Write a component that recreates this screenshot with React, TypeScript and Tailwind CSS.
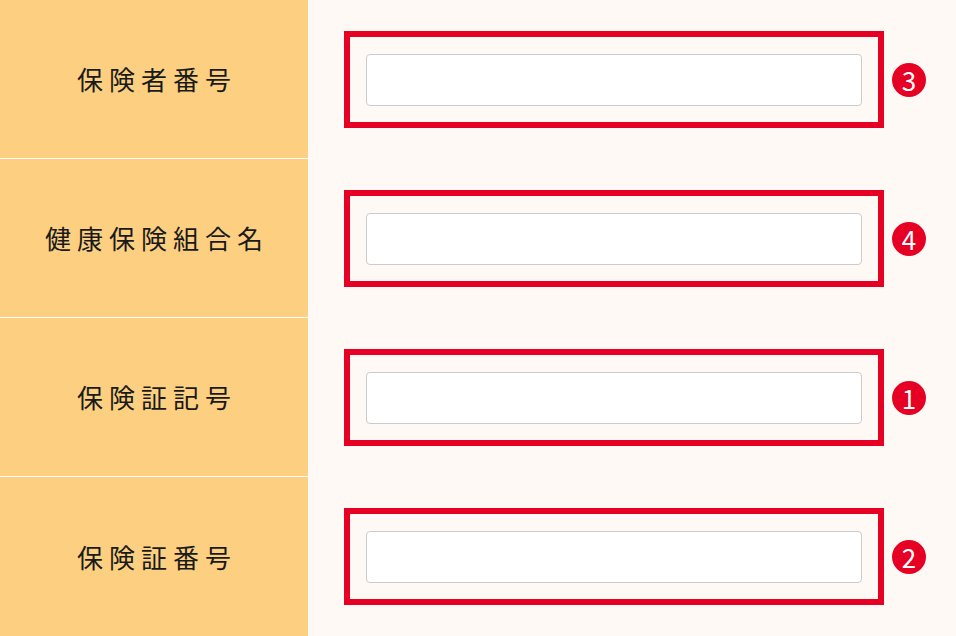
const rows = [
  { label: "保険者番号", num: "3" },
  { label: "健康保険組合名", num: "4" },
  { label: "保険証記号", num: "1" },
  { label: "保険証番号", num: "2" },
];

export default function App() {
  return (
    <div
      className="flex flex-col w-[956px] h-[636px] bg-[#fff9f5]"
      style={{ fontFamily: '"Noto Sans CJK JP", "Noto Sans", sans-serif' }}
    >
      {rows.map((row, i) => (
        <div key={row.label} className="flex h-[159px]">
          <div
            className={
              i < rows.length - 1
                ? "w-[308px] shrink-0 bg-[#fcd080] border-b border-white flex items-center justify-center"
                : "w-[308px] shrink-0 bg-[#fcd080] flex items-center justify-center"
            }
          >
            <span className="text-[26px] leading-none tracking-[6px] pl-[6px] text-[#1a1a1a]">
              {row.label}
            </span>
          </div>
          <div className="flex items-center pl-[36px]">
            <div className="w-[540px] h-[97px] border-[6px] border-[#e60023] p-[16px] flex items-center">
              <input
                type="text"
                className="w-full h-[52px] bg-white border border-[#cccccc] rounded-[4px] outline-none"
              />
            </div>
            <div className="ml-[8px] w-[34px] h-[34px] rounded-full bg-[#e60023] flex items-center justify-center text-white text-[26px] leading-none font-normal">
              {row.num}
            </div>
          </div>
        </div>
      ))}
    </div>
  );
}
